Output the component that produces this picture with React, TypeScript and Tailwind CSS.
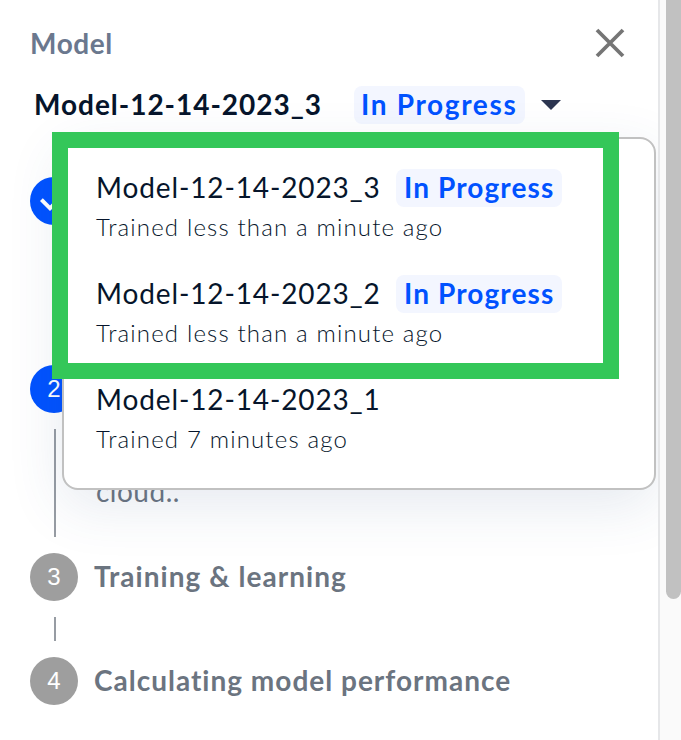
import { useState } from 'react'

type Model = {
  name: string
  trained: string
  inProgress: boolean
}

const models: Model[] = [
  { name: 'Model-12-14-2023_3', trained: 'Trained less than a minute ago', inProgress: true },
  { name: 'Model-12-14-2023_2', trained: 'Trained less than a minute ago', inProgress: true },
  { name: 'Model-12-14-2023_1', trained: 'Trained 7 minutes ago', inProgress: false },
]

function ModelMenu({ onSelect }: { onSelect: (model: Model) => void }) {
  return (
    <div className="absolute left-[62px] top-[49px] z-10 w-[594px] h-[353px] rounded-2xl border-2 border-[#c1c1c1] bg-white pt-[30px] pl-8 shadow-[0_16px_56px_rgba(50,85,130,0.12)]">
      {models.map((model) => (
        <button key={model.name} className="flex h-[106px] flex-col items-start text-left" onClick={() => onSelect(model)}>
          <div className="flex h-[38px]">
            <span className="w-[300px] text-[28px] leading-9 tracking-[0.88px] text-[#06152b]">{model.name}</span>
            {model.inProgress && (
              <span className="h-[38px] w-[166px] rounded-lg bg-[#f3f6ff] pl-2 text-[28px] font-bold leading-9 tracking-[1.1px] text-[#0052ff]">
                In Progress
              </span>
            )}
          </div>
          <p className="mt-1 h-8 text-[24px] font-light leading-8 tracking-[1.16px] text-[#06152b]">{model.trained}</p>
        </button>
      ))}
    </div>
  )
}

function Connector({ className }: { className: string }) {
  return <div className={`my-4 ml-[54px] w-0.5 bg-[#979ca3] ${className}`} />
}

function Badge({ children, active }: { children: React.ReactNode; active?: boolean }) {
  return (
    <div
      className={`flex size-12 shrink-0 items-center justify-center rounded-full font-['Liberation_Sans',sans-serif] text-[24px] text-white ${
        active ? 'bg-[#0052ff]' : 'bg-[#9e9e9e]'
      }`}
    >
      {children}
    </div>
  )
}

export default function App() {
  const [open, setOpen] = useState(true)
  const [selected, setSelected] = useState(models[0])

  const handleSelect = (model: Model) => {
    setSelected(model)
    setOpen(false)
  }

  return (
    <div className="flex h-[740px] w-[681px] overflow-hidden bg-white font-[Lato,sans-serif] whitespace-nowrap">
      <div className="relative h-full w-[660px] overflow-hidden border-r-2 border-[#e6e7e9]">
        <div className="flex h-[88px] items-center justify-between pb-0.5 pl-[30px] pr-[33px]">
          <h2 className="text-[28px] font-bold tracking-[0.6px] text-[#6b788e]">Model</h2>
          <button aria-label="Close">
            <svg width="30" height="30" viewBox="0 0 30 30" fill="none" stroke="#757575" strokeWidth="3.8">
              <path d="M2 2 28 28M28 2 2 28" />
            </svg>
          </button>
        </div>

        <div className="relative">
          <div className="flex h-[34px] items-center pl-[34px]">
            <span className="w-[320px] pb-0.5 text-[28px] font-bold tracking-[0.97px] text-[#06152b]">{selected.name}</span>
            <span className="h-[38px] w-[171px] rounded-lg bg-[#f3f6ff] pl-[7px] text-[28px] font-bold leading-9 tracking-[1.65px] text-[#0052ff]">
              In Progress
            </span>
            <button className="ml-4" aria-label="Choose model" onClick={() => setOpen(!open)}>
              <svg width="20" height="10" viewBox="0 0 20 10" fill="#2c3550">
                <path d="M0 0h20L10 10z" />
              </svg>
            </button>
          </div>
          {open && <ModelMenu onSelect={handleSelect} />}
        </div>

        <div className="pt-[55px]">
          <div className="flex pl-[30px]">
            <Badge active>
              <svg width="48" height="48" viewBox="0 0 24 24" fill="white">
                <path d="M10 17l-5-5 1.4-1.4 3.6 3.6 7.6-7.6L19 8z" />
              </svg>
            </Badge>
          </div>
          <Connector className="h-[108px]" />
          <div className="flex pl-[30px]">
            <Badge active>2</Badge>
          </div>
          <div className="flex">
            <Connector className="h-[108px]" />
            <p className="pl-10 pt-[58px] text-[28px] leading-10 tracking-[0.5px] text-[#6b7480]">cloud..</p>
          </div>
          <div className="flex items-center gap-4 pl-[30px]">
            <Badge>3</Badge>
            <h3 className="pb-0.5 text-[28px] font-bold tracking-[1.05px] text-[#6b7480]">Training &amp; learning</h3>
          </div>
          <Connector className="h-6" />
          <div className="flex items-center gap-4 pl-[30px]">
            <Badge>4</Badge>
            <h3 className="pb-0.5 text-[28px] font-bold tracking-[1px] text-[#6b7480]">Calculating model performance</h3>
          </div>
        </div>

        <div className="pointer-events-none absolute left-[52px] top-[132px] z-20 h-[247px] w-[567px] border-[16px] border-[#34c759]" />
      </div>

      <div className="flex h-full w-[21px] justify-end bg-[#fafafa]">
        <div className="h-[599px] w-[15px] rounded-b-full bg-[#c1c1c1]" />
      </div>
    </div>
  )
}
